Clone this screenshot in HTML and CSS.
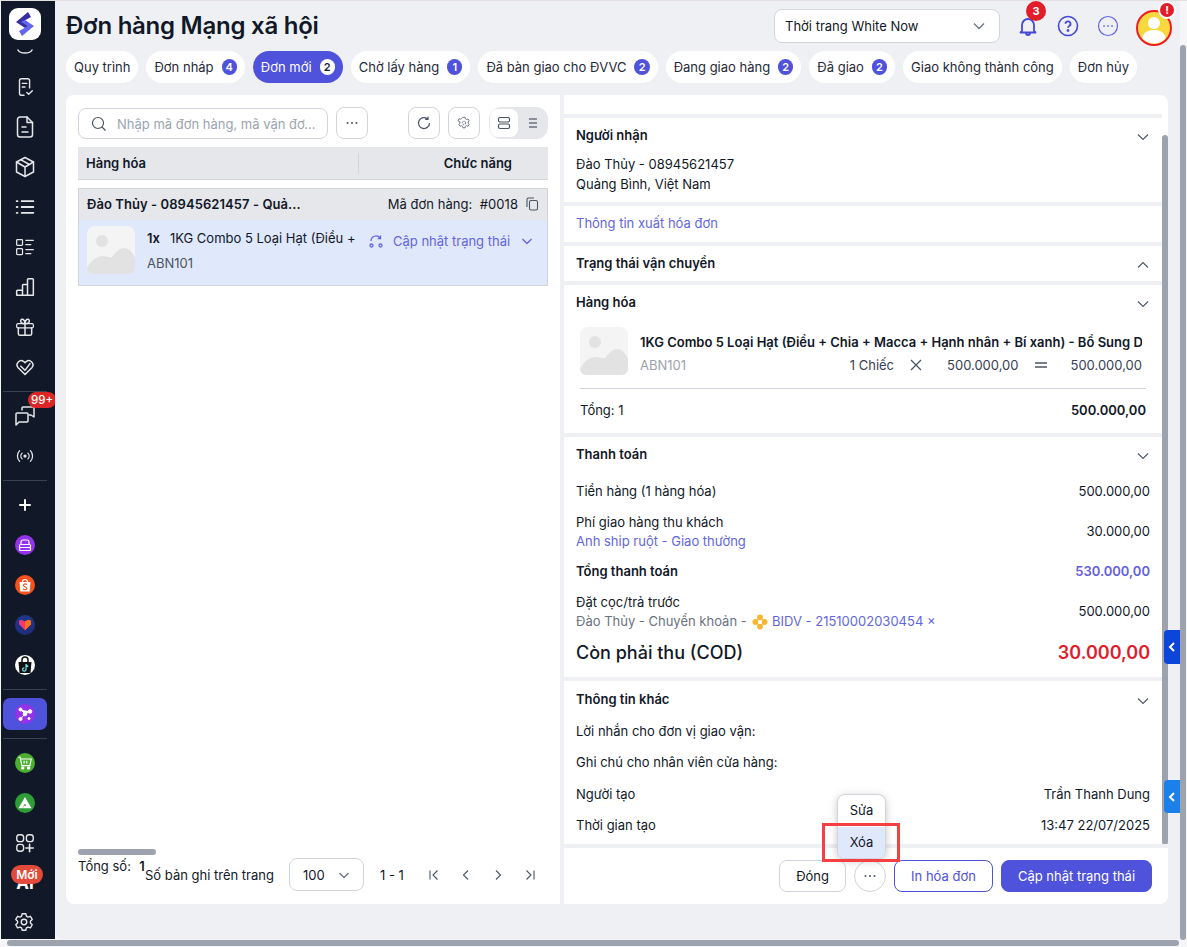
FILE: index.html
```html
<!DOCTYPE html>
<html lang="vi">
<head>
<meta charset="utf-8">
<title>Đơn hàng Mạng xã hội</title>
<link rel="stylesheet" href="styles.css">
</head>
<body>
<div class="app">
  <aside class="side">
    <div class="logo">
      <svg width="24" height="26" viewBox="0 0 24 26"><path d="M15 1 L18 6 L9 11 L16 15 L12 17 L3 11 Z" fill="#3730a3"/><path d="M9 25 L6 20 L15 15 L8 11 L12 9 L21 15 Z" fill="#6366f1"/></svg>
    </div>
    <div class="side-item cut"><svg class="ic" width="24" height="8" viewBox="0 0 24 8"><path d="M5 1c1 2 3 3 7 3s6-1 7-3"/></svg></div>
    <div class="side-item"><svg class="ic" width="22" height="22" viewBox="0 0 24 24"><path d="M11 21H8a2 2 0 0 1-2-2V5a2 2 0 0 1 2-2h7a2 2 0 0 1 2 2v8"/><path d="M9 8h5M9 12h3M14 18l2 2 4-4"/></svg></div>
    <div class="side-item"><svg class="ic" width="24" height="24" viewBox="0 0 24 24"><path d="M14 2H7a2.500 2.500 0 0 0-2.500 2.500v15A2.500 2.500 0 0 0 7 22h10a2.500 2.500 0 0 0 2.500-2.500V7.500z"/><path d="M14 2v5.500h5.500M9 12h4M9 17h6"/></svg></div>
    <div class="side-item"><svg class="ic" width="24" height="24" viewBox="0 0 24 24"><path d="M12 2.500 20.500 7v10L12 21.500 3.500 17V7z"/><path d="M3.500 7 12 12l8.500-5M12 12v9.500M8 4.800l8.500 4.700"/></svg></div>
    <div class="side-item"><svg class="ic" width="20" height="20" viewBox="0 0 24 24"><path d="M8 5h14M8 12h14M8 19h14M2 5h1M2 12h1M2 19h1" stroke-width="2.200"/></svg></div>
    <div class="side-item"><svg class="ic" width="20" height="20" viewBox="0 0 24 24"><rect x="2" y="3" width="7" height="7" rx="1"/><rect x="2" y="14" width="7" height="7" rx="1"/><path d="M13 4h9M13 9h6M13 15h9M13 20h6"/></svg></div>
    <div class="side-item"><svg class="ic" width="20" height="20" viewBox="0 0 24 24"><path d="M2 22v-5a1 1 0 0 1 1-1h6v6zM9 22V10a1 1 0 0 1 1-1h5v13zM15 22V3a1 1 0 0 1 1-1h5a1 1 0 0 1 1 1v19zM2 22h20" stroke-width="1.800"/></svg></div>
    <div class="side-item"><svg class="ic" width="20" height="20" viewBox="0 0 24 24"><rect x="2" y="8" width="20" height="5" rx="1.500"/><path d="M4 13v7a2 2 0 0 0 2 2h12a2 2 0 0 0 2-2v-7M12 8v14M12 8C8.500 8 6 6.500 7 4s5-1.500 5 4c0-5.500 4-6.500 5-4s-1.500 4-5 4z" stroke-width="1.800"/></svg></div>
    <div class="side-item"><svg class="ic" width="20" height="20" viewBox="0 0 24 24"><path d="M12 21 3.500 12.500a5 5 0 0 1 7-7l1.500 1.500 1.500-1.500a5 5 0 0 1 7 7z" stroke-width="1.800"/><path d="M7 11l5 5 6-8" stroke-width="1.800"/></svg></div>
    <div class="side-div"></div>
    <div class="side-item">
      <svg class="ic" width="24" height="24" viewBox="0 0 24 24"><path d="M9 6V4a1 1 0 0 1 1-1h10a1 1 0 0 1 1 1v9l0 0-3-2h-2"/><path d="M3 10a1 1 0 0 1 1-1h10a1 1 0 0 1 1 1v7a1 1 0 0 1-1 1H6l-3 3z"/></svg>
      <span class="badge-99">99+</span>
    </div>
    <div class="side-item"><svg class="ic" width="20" height="20" viewBox="0 0 24 24"><circle cx="12" cy="12" r="1.200" fill="#e5e7eb"/><path d="M8.500 8.500a5 5 0 0 0 0 7M15.500 8.500a5 5 0 0 1 0 7M5.500 5.500a9.500 9.500 0 0 0 0 13M18.500 5.500a9.500 9.500 0 0 1 0 13"/></svg></div>
    <div class="side-div"></div>
    <div class="side-item"><svg class="ic" width="24" height="24" viewBox="0 0 24 24"><path d="M12 7v10M7 12h10" stroke-width="2" stroke="#fff"/></svg></div>
    <div class="side-item"><span class="disc purple"><svg width="16" height="16" viewBox="0 0 16 16" fill="none" stroke="#fff" stroke-width="1.200"><path d="M4 7V5a2 2 0 0 1 2-2h4a2 2 0 0 1 2 2v2"/><rect x="2.500" y="7.500" width="11" height="3" rx="1"/><rect x="2.500" y="10.500" width="11" height="3" rx="1"/></svg></span></div>
    <div class="side-item"><span class="disc shopee"><svg width="16" height="16" viewBox="0 0 16 16"><path d="M2.500 5h11l-.8 9.500H3.300z" fill="#fff"/><path d="M5.500 5a2.500 2.500 0 0 1 5 0" fill="none" stroke="#fff" stroke-width="1.200"/><path d="M10 7.500C8.500 6.500 6.300 7 6.500 8.500S10 10 9.800 11.500 7.300 13 6 12" fill="none" stroke="#f4511e" stroke-width="1.200"/></svg></span></div>
    <div class="side-item"><span class="disc lazada"><svg width="14" height="12" viewBox="0 0 16 14"><path d="M8 13 1 6V2l3-1 4 2 4-2 3 1v4z" fill="#f5357b"/><path d="M8 13V3l4-2 3 1v4z" fill="#f97316"/></svg></span></div>
    <div class="side-item"><span class="disc tiktok"><svg width="16" height="18" viewBox="0 0 16 18"><path d="M1.500 6h13l-1 11h-11z" fill="#111"/><path d="M5 6V4a3 3 0 0 1 6 0v2" fill="none" stroke="#111" stroke-width="1.500"/><path d="M9 8v5.500a1.700 1.700 0 1 1-1.700-1.700M9 8.500c.4 1.200 1.200 1.800 2.300 1.900" fill="none" stroke="#6ee7f0" stroke-width="1.200"/></svg></span></div>
    <div class="side-div"></div>
    <div class="side-active"><span class="disc purple"><svg width="16" height="16" viewBox="0 0 16 16" fill="#fff" stroke="#fff" stroke-width="1"><path d="M3.500 3.500 8 8l5-2.500M8 8l-4.500 5"/><circle cx="3.500" cy="3.500" r="1.500"/><circle cx="8" cy="8" r="1.800"/><circle cx="13" cy="5.500" r="1.800"/><circle cx="3.500" cy="13" r="1.500"/><circle cx="12" cy="12.500" r="1"/></svg></span></div>
    <div class="side-div after"></div>
    <div class="side-item"><span class="disc green"><svg width="16" height="16" viewBox="0 0 18 18" fill="none" stroke="#fff" stroke-width="1.300"><path d="M1.500 2.500h2l2 9.500h9l1.500-7.500H4"/><path d="M8 6.500v3M11 6.500v3"/><circle cx="6.500" cy="14.500" r="1.200" fill="#fff"/><circle cx="13" cy="14.500" r="1.200" fill="#fff"/></svg></span></div>
    <div class="side-item"><span class="disc dgreen"><svg width="16" height="14" viewBox="0 0 18 16"><path d="M9 1 1.500 14H6l3-5.500L10.500 11H8l-1.500 3H16.500z" fill="#fff"/></svg></span></div>
    <div class="side-item"><svg class="ic" width="22" height="22" viewBox="0 0 24 24"><rect x="3" y="3" width="7.500" height="7.500" rx="3"/><rect x="13.500" y="3" width="7.500" height="7.500" rx="3"/><rect x="3" y="13.500" width="7.500" height="7.500" rx="3"/><path d="M17 13.500v8M13 17.500h8" stroke-width="1.800"/></svg></div>
    <div class="side-item">
      <span class="ai">AI</span>
      <span class="badge-new">Mới</span>
    </div>
    <div class="side-item gear"><svg class="ic" width="22" height="22" viewBox="0 0 24 24"><circle cx="12" cy="12" r="3"/><path d="M10 3h4l.6 2.700 1.800 1 2.600-.9 2 3.400-2 1.900v2l2 1.900-2 3.400-2.600-.9-1.800 1L14 21h-4l-.6-2.500-1.800-1-2.600.9-2-3.400 2-1.900v-2l-2-1.900 2-3.400 2.600.9 1.800-1z"/></svg></div>
  </aside>

  <main class="main">
    <header class="top">
      <h1 class="title">Đơn hàng Mạng xã hội</h1>
      <div class="store"><span>Thời trang White Now</span><svg class="chev" width="16" height="16" viewBox="0 0 16 16"><path d="M3 5.500l5 5 5-5"/></svg></div>
      <div class="top-icons">
        <span class="top-ic">
          <svg width="24" height="24" viewBox="0 0 24 24" fill="none" stroke="#4548d6" stroke-width="1.800"><path d="M6 17V11a6 6 0 0 1 12 0v6l1.500 1.500h-15zM10 19a2 2 0 0 0 4 0" stroke-linejoin="round"/></svg>
          <span class="badge-bell">3</span>
        </span>
        <span class="top-ic">
          <svg width="22" height="22" viewBox="0 0 22 22" fill="none" stroke="#4548d6" stroke-width="1.600"><circle cx="11" cy="11" r="9.500"/><path d="M8.500 8.800a2.500 2.500 0 1 1 3.700 2.200c-.8.500-1.200 1-1.200 1.800" stroke-width="1.800"/><circle cx="11" cy="15.500" r=".6" fill="#4548d6"/></svg>
        </span>
        <span class="top-ic">
          <svg width="22" height="22" viewBox="0 0 22 22" fill="none" stroke="#6366e0" stroke-width="1.200"><circle cx="11" cy="11" r="9.500"/><path d="M6.800 11h.5M10.800 11h.5M14.800 11h.5" stroke-width="1.500" stroke-linecap="round"/></svg>
        </span>
        <span class="avatar">
          <svg width="32" height="32" viewBox="0 0 32 32"><circle cx="16" cy="11" r="6" fill="#fff"/><path d="M4 28c1-8 6-10 12-10s11 2 12 10c-3 3-8 4-12 4s-9-1-12-4z" fill="#fff"/></svg>
          <span class="badge-alert">!</span>
        </span>
      </div>
    </header>

    <nav class="tabs">
      <a class="tab">Quy trình</a>
      <a class="tab">Đơn nháp <b class="count">4</b></a>
      <a class="tab on">Đơn mới <b class="count">2</b></a>
      <a class="tab">Chờ lấy hàng <b class="count">1</b></a>
      <a class="tab">Đã bàn giao cho ĐVVC <b class="count">2</b></a>
      <a class="tab">Đang giao hàng <b class="count">2</b></a>
      <a class="tab">Đã giao <b class="count">2</b></a>
      <a class="tab">Giao không thành công</a>
      <a class="tab">Đơn hủy</a>
    </nav>

    <div class="panels">
      <section class="list">
        <div class="toolbar">
          <div class="search">
            <svg width="16" height="16" viewBox="0 0 16 16" fill="none" stroke="#4b5563" stroke-width="1.200"><circle cx="7" cy="7" r="5.500"/><path d="M11 11l3.500 3.500"/></svg>
            <span>Nhập mã đơn hàng, mã vận đơ...</span>
          </div>
          <button class="sq"><svg width="16" height="16" viewBox="0 0 16 16"><circle cx="3.500" cy="8" r="1" fill="#4b5563"/><circle cx="8" cy="8" r="1" fill="#4b5563"/><circle cx="12.500" cy="8" r="1" fill="#4b5563"/></svg></button>
          <button class="sq push"><svg width="16" height="16" viewBox="0 0 16 16" fill="none" stroke="#4b5563" stroke-width="1.200"><path d="M13.500 8A5.500 5.500 0 1 1 11.500 3.800M12 1.500v2.800H9.200"/></svg></button>
          <button class="sq"><svg width="14" height="14" viewBox="0 0 16 16" fill="none" stroke="#6b7280" stroke-width="1.100"><circle cx="8" cy="8" r="2" stroke-dasharray="2 1"/><path d="M6.700 1.500h2.600l.4 1.700 1.300.7 1.600-.6 1.300 2.300-1.200 1.200v1.400l1.200 1.200-1.300 2.300-1.600-.6-1.300.7-.4 1.700H6.700l-.4-1.700-1.300-.7-1.600.6-1.300-2.300 1.200-1.200V6.600L1.100 5.400l1.300-2.300 1.600.6 1.300-.7z"/></svg></button>
          <div class="view">
            <span class="view-on"><svg width="16" height="16" viewBox="0 0 16 16" fill="none" stroke="#4b5563" stroke-width="1.200"><rect x="2.500" y="2.500" width="11" height="4.500" rx="1.500"/><rect x="2.500" y="9" width="11" height="4.500" rx="1.500"/></svg></span>
            <span class="view-off"><svg width="16" height="16" viewBox="0 0 16 16" fill="none" stroke="#6b7280" stroke-width="1.400"><path d="M4 4h8M4 8h8M4 12h8"/></svg></span>
          </div>
        </div>
        <div class="thead">
          <span class="th-a">Hàng hóa</span>
          <span class="th-b">Chức năng</span>
        </div>
        <article class="order">
          <div class="order-head">
            <b>Đào Thủy - 08945621457 - Quả...</b>
            <span class="code">Mã đơn hàng:&nbsp; #0018</span>
            <svg width="14" height="14" viewBox="0 0 14 14" fill="none" stroke="#4b5563" stroke-width="1.100"><rect x="4.500" y="3.500" width="8" height="9.500" rx="1.500"/><path d="M2 10V2.500A1.500 1.500 0 0 1 3.500 1H9"/></svg>
          </div>
          <div class="order-body">
            <svg class="thumb" width="48" height="48" viewBox="0 0 48 48"><rect width="48" height="48" rx="8" fill="#f4f4f4"/><circle cx="15" cy="15" r="6" fill="#e2e2e2"/><path d="M0 42c4-8 10-12 16-12 4 0 6 2 9 1 4-5 8-9 12-9 5 0 9 5 11 10v10a6 6 0 0 1-6 6H6a6 6 0 0 1-6-6z" fill="#e2e2e2"/></svg>
            <div class="order-info">
              <div class="order-name"><b>1x</b><span>1KG Combo 5 Loại Hạt (Điều +</span></div>
              <div class="order-sku">ABN101</div>
            </div>
            <div class="order-act">
              <svg width="16" height="16" viewBox="0 0 16 16" fill="none" stroke="#6366e0" stroke-width="1.300"><path d="M3 8a5 5 0 0 1 9-3"/><path d="M12.500 2.500v3H9.800"/><circle cx="3.500" cy="12.500" r="1.500"/><circle cx="12.500" cy="12.500" r="1.500"/></svg>
              <span>Cập nhật trạng thái</span>
              <svg class="chev-b" width="14" height="14" viewBox="0 0 14 14"><path d="M2.500 5l4.500 4.500L11.500 5"/></svg>
            </div>
          </div>
        </article>
        <div class="list-foot">
          <div class="hthumb"></div>
          <div class="pager">
            <div class="total">Tổng số: &nbsp;<b>1</b></div>
            <span class="per">Số bản ghi trên trang</span>
            <div class="size"><span>100</span><svg class="chev" width="14" height="14" viewBox="0 0 14 14"><path d="M2.500 5l4.500 4.500L11.500 5"/></svg></div>
            <span class="range">1 - 1</span>
            <div class="nav">
              <svg width="16" height="16" viewBox="0 0 16 16"><path d="M4 3.500v9M11.500 3.500 7 8l4.500 4.500"/></svg>
              <svg width="16" height="16" viewBox="0 0 16 16"><path d="M10 3.500 5.500 8l4.500 4.500"/></svg>
              <svg width="16" height="16" viewBox="0 0 16 16"><path d="M6 3.500 10.500 8 6 12.500"/></svg>
              <svg width="16" height="16" viewBox="0 0 16 16"><path d="M12 3.500v9M4.500 3.500 9 8l-4.500 4.500"/></svg>
            </div>
          </div>
        </div>
      </section>

      <section class="detail">
        <div class="scroll">
          <div class="stack">
            <div class="sec sec-top"></div>
            <div class="sec">
              <div class="sec-head"><b>Người nhận</b><svg class="chev-g" width="16" height="16" viewBox="0 0 16 16"><path d="M3 5.500l5 5 5-5"/></svg></div>
              <div class="recv">Đào Thủy - 08945621457<br>Quảng Bình, Việt Nam</div>
            </div>
            <div class="sec sec-link"><a class="link">Thông tin xuất hóa đơn</a></div>
            <div class="sec sec-ship">
              <div class="sec-head"><b>Trạng thái vận chuyển</b><svg class="chev-g" width="16" height="16" viewBox="0 0 16 16"><path d="M3 10.500l5-5 5 5"/></svg></div>
            </div>
            <div class="sec sec-goods">
              <div class="sec-head"><b>Hàng hóa</b><svg class="chev-g" width="16" height="16" viewBox="0 0 16 16"><path d="M3 5.500l5 5 5-5"/></svg></div>
              <div class="good">
                <svg class="thumb" width="48" height="48" viewBox="0 0 48 48"><rect width="48" height="48" rx="8" fill="#f4f4f4"/><circle cx="15" cy="15" r="6" fill="#e2e2e2"/><path d="M0 42c4-8 10-12 16-12 4 0 6 2 9 1 4-5 8-9 12-9 5 0 9 5 11 10v10a6 6 0 0 1-6 6H6a6 6 0 0 1-6-6z" fill="#e2e2e2"/></svg>
                <div class="good-info">
                  <div class="good-name">1KG Combo 5 Loại Hạt (Điều + Chia + Macca + Hạnh nhân + Bí xanh) - Bổ Sung D</div>
                  <div class="good-row">
                    <span class="muted">ABN101</span>
                    <span class="qty">1 Chiếc</span>
                    <svg class="op" width="12" height="12" viewBox="0 0 12 12"><path d="M1 1l10 10M11 1 1 11"/></svg>
                    <span>500.000,00</span>
                    <svg class="op eq" width="14" height="8" viewBox="0 0 14 8"><path d="M1 2h12M1 6h12"/></svg>
                    <span>500.000,00</span>
                  </div>
                </div>
              </div>
              <div class="good-total"><span>Tổng: 1</span><b>500.000,00</b></div>
            </div>
            <div class="sec sec-pay">
              <div class="sec-head"><b>Thanh toán</b><svg class="chev-g" width="16" height="16" viewBox="0 0 16 16"><path d="M3 5.500l5 5 5-5"/></svg></div>
              <div class="rows">
                <div class="row"><span>Tiền hàng (1 hàng hóa)</span><span>500.000,00</span></div>
                <div class="row two"><div>Phí giao hàng thu khách<div class="link">Anh ship ruột - Giao thường</div></div><span>30.000,00</span></div>
                <div class="row"><b>Tổng thanh toán</b><b class="purple-t">530.000,00</b></div>
                <div class="row two"><div>Đặt cọc/trả trước<div class="dep"><span class="grey">Đào Thủy - Chuyển khoản - </span><svg class="flower" width="16" height="16" viewBox="0 0 16 16"><g fill="#f7b733"><circle cx="8" cy="3.500" r="3"/><circle cx="8" cy="12.500" r="3"/><circle cx="3.500" cy="8" r="3"/><circle cx="12.500" cy="8" r="3"/></g><circle cx="8" cy="8" r="2" fill="#fff"/></svg><span class="link"> BIDV - 21510002030454 ×</span></div></div><span>500.000,00</span></div>
                <div class="row cod"><span>Còn phải thu (COD)</span><span class="red">30.000,00</span></div>
              </div>
            </div>
            <div class="sec sec-other">
              <div class="sec-head"><b>Thông tin khác</b><svg class="chev-g" width="16" height="16" viewBox="0 0 16 16"><path d="M3 5.500l5 5 5-5"/></svg></div>
              <div class="rows other">
                <div class="row"><span>Lời nhắn cho đơn vị giao vận:</span></div>
                <div class="row"><span>Ghi chú cho nhân viên cửa hàng:</span></div>
                <div class="row"><span>Người tạo</span><span>Trần Thanh Dung</span></div>
                <div class="row"><span>Thời gian tạo</span><span>13:47 22/07/2025</span></div>
              </div>
            </div>
          </div>
          <div class="vthumb"></div>
        </div>
        <div class="actions">
          <button class="btn">Đóng</button>
          <button class="btn round"><svg width="16" height="16" viewBox="0 0 16 16"><circle cx="3.500" cy="8" r="1" fill="#4b5563"/><circle cx="8" cy="8" r="1" fill="#4b5563"/><circle cx="12.500" cy="8" r="1" fill="#4b5563"/></svg></button>
          <button class="btn outline">In hóa đơn</button>
          <button class="btn solid">Cập nhật trạng thái</button>
          <div class="menu">
            <div class="menu-item">Sửa</div>
            <div class="menu-item hover">Xóa</div>
          </div>
          <div class="mark"></div>
        </div>
      </section>
    </div>
    <span class="flag dark"><svg width="10" height="10" viewBox="0 0 10 10"><path d="M7 1 3 5l4 4"/></svg></span>
    <span class="flag light"><svg width="10" height="10" viewBox="0 0 10 10"><path d="M7 1 3 5l4 4"/></svg></span>
  </main>
  <div class="page-v"></div>
  <div class="page-h"></div>
</div>
</body>
</html>
```
FILE: styles.css
```css
* { box-sizing: border-box; }
html, body { margin: 0; height: 100%; overflow: hidden; background: #f6f6f8; }
body { font: 13px/20px Inter, "Noto Sans", sans-serif; color: #111827; }
b { font-weight: 600; }
button { font: inherit; color: inherit; background: #fff; padding: 0; cursor: pointer; }
svg { display: block; flex: none; }

.app { position: relative; display: flex; width: 1187px; height: 947px; padding-left: 1px; border-top: 1px solid #e3dfe0; }

/* sidebar */
.side { width: 54px; height: 938px; flex: none; background: #111827; display: flex; flex-direction: column; padding-top: 7px; overflow: hidden; }
.logo { width: 32px; height: 32px; flex: none; margin: 0 0 7px 8px; background: #fff; border-radius: 9px; display: flex; align-items: center; justify-content: center; }
.side-item { position: relative; height: 40px; flex: none; display: flex; align-items: center; justify-content: center; padding-right: 6px; }
.side-item.cut { height: 20px; align-items: flex-start; padding-top: 2px; }
.side-item.gear { padding-right: 8px; height: 38px; }
.ic { fill: none; stroke: #e5e7eb; stroke-width: 1.500; stroke-linecap: round; stroke-linejoin: round; }
.side-div { height: 1px; margin: 4px 8px 4px 2px; background: #374151; flex: none; }
.side-div.after { margin-top: 8px; }
.side-active { height: 32px; margin: 4px 8px 0 2px; border-radius: 7px; background: #4f52db; display: flex; align-items: center; justify-content: center; flex: none; }
.disc { width: 20px; height: 20px; border-radius: 50%; display: flex; align-items: center; justify-content: center; overflow: hidden; }
.purple { background: #9333ea; }
.shopee { background: #f4511e; }
.lazada { background: linear-gradient(160deg, #1e3a8a, #1e2a78); }
.tiktok { background: #fff; }
.green { background: #4caf32; }
.dgreen { background: #2e9e36; }
.badge-99 { position: absolute; top: -4px; left: 27px; height: 16px; padding: 0 3px; border-radius: 8px; background: #dc2626; color: #fff; font-size: 11.500px; line-height: 16px; font-weight: 500; }
.ai { color: #fff; font-weight: 700; font-size: 17px; line-height: 20px; }
.badge-new { position: absolute; top: 2px; left: 10px; width: 32px; height: 19px; border-radius: 10px; background: #e24a3b; color: #fff; font-size: 12px; font-weight: 600; line-height: 19px; text-align: center; }

/* main */
.main { position: relative; flex: none; width: 1125px; height: 938px; background: #eef0f4; border-radius: 0 0 0 8px; padding: 0 12px 0 11px; }
.top { display: flex; align-items: center; height: 50px; margin-right: -4px; }
.title { margin: 0; font-size: 24px; line-height: 32px; font-weight: 600; letter-spacing: -.25px; }
.store { margin-left: auto; width: 226px; height: 34px; margin-top: -1px; display: flex; align-items: center; justify-content: space-between; padding: 0 12px 0 10px; background: #fff; border: 1px solid #d1d5db; border-radius: 8px; }
.chev, .chev-g, .chev-b { fill: none; stroke: #6b7280; stroke-width: 1.300; }
.chev-g { stroke: #4b5563; stroke-width: 1.100; }
.chev-b { stroke: #6366e0; }
.top-icons { display: flex; align-items: center; margin-left: 8px; }
.top-ic { position: relative; width: 40px; height: 40px; display: flex; align-items: center; justify-content: center; }
.badge-bell { position: absolute; top: -5px; left: 18px; width: 20px; height: 20px; border-radius: 50%; background: #e11d2a; color: #fff; font-size: 11px; font-weight: 700; line-height: 20px; text-align: center; }
.avatar { position: relative; width: 36px; height: 36px; margin-left: 8px; margin-top: 3px; border-radius: 50%; background: #f6d93f; border: 2px solid #ef1c24; display: flex; align-items: flex-end; justify-content: center; overflow: visible; }
.avatar svg { clip-path: circle(16px at 16px 16px); }
.badge-alert { position: absolute; top: -11px; right: -6px; width: 18px; height: 18px; border-radius: 50%; background: #e11d2a; border: 2px solid #fff; color: #fff; font-size: 11px; font-weight: 700; line-height: 14px; text-align: center; }

.tabs { display: flex; gap: 8px; height: 32px; margin-bottom: 12px; }
.tab { display: flex; align-items: center; gap: 8px; height: 32px; padding: 0 8px; background: #fff; border-radius: 16px; white-space: nowrap; color: #1f2937; }
.count { width: 15.200px; height: 16px; border-radius: 8px; background: #4f52db; color: #fff; font-size: 11px; line-height: 16px; text-align: center; font-weight: 600; }
.tab.on { background: #4f52db; color: #fff; }
.tab.on .count { background: #fff; color: #111827; }

.panels { display: flex; gap: 4px; height: 809px; }
.list { width: 494px; position: relative; background: #fff; border-radius: 8px 0 0 8px; padding: 12px 12px 0; display: flex; flex-direction: column; }
.toolbar { display: flex; align-items: center; gap: 8px; height: 32px; }
.search { width: 250px; height: 31px; margin-top: 1px; display: flex; align-items: center; gap: 10px; padding: 0 12px; border: 1px solid #d1d5db; border-radius: 8px; color: #9ca3af; white-space: nowrap; overflow: hidden; }
.sq { width: 32px; height: 32px; display: flex; align-items: center; justify-content: center; border: 1px solid #d1d5db; border-radius: 8px; }
.push { margin-left: 32px; }
.view { display: flex; align-items: center; width: 59px; height: 32px; margin-left: 1px; padding: 1px; border-radius: 12px; background: #e5e7eb; }
.view-on { width: 28px; height: 28px; background: #fff; border-radius: 8px; display: flex; align-items: center; justify-content: center; }
.view-off { flex: 1; display: flex; align-items: center; justify-content: center; }
.thead { display: flex; align-items: center; height: 33px; margin-top: 8px; background: #e5e7eb; border-bottom: 1px solid #d1d5db; font-weight: 600; }
.th-a { width: 281px; height: 21px; line-height: 21px; padding-left: 8px; border-right: 1px solid #d1d5db; }
.th-b { width: 153px; text-align: right; }

.order { margin-top: 8px; height: 98px; border: 1px solid #d1d5db; }
.order-head { display: flex; align-items: center; height: 31px; padding: 0 8px 1px; background: #e5e7eb; }
.order-head b { flex: 1; white-space: nowrap; letter-spacing: .07px; }
.order-head svg { margin-left: 7px; }
.code { font-weight: 400; white-space: nowrap; letter-spacing: .05px; }
.order-body { position: relative; display: flex; height: 65px; padding: 6px 8px 0; background: #e0e8fb; }
.order-info { margin-left: 12px; width: 210px; }
.order-name { display: flex; gap: 10px; height: 20px; margin-top: 2px; white-space: nowrap; overflow: hidden; }
.order-sku { margin-top: 5px; color: #4b5563; }
.order-act { display: flex; align-items: center; height: 20px; margin-top: 5px; margin-left: 11px; color: #6366e0; gap: 9px; white-space: nowrap; }
.chev-b { margin-left: 1px; }

.list-foot { margin-top: auto; height: 55px; }
.hthumb { width: 78px; height: 6px; border-radius: 3px; background: #9ca3af; }
.pager { display: flex; align-items: center; height: 33px; margin-top: 3px; white-space: nowrap; }
.total { width: 67px; margin-top: -18px; }
.total b { margin-left: 1px; }
.per { width: 144px; }
.size { width: 75px; height: 33px; display: flex; align-items: center; justify-content: space-between; padding: 0 12px 0 13px; border: 1px solid #d1d5db; border-radius: 8px; }
.range { margin-left: 16px; width: 45px; }
.nav { display: flex; gap: 16px; margin-left: 1px; }
.nav svg { fill: none; stroke: #4b5563; stroke-width: 1.100; }

.detail { flex: 1; min-width: 0; display: flex; flex-direction: column; gap: 4px; }
.scroll { position: relative; height: 749px; padding-right: 6px; background: #fff; border-radius: 0 8px 0 0; overflow: hidden; }
.stack { display: flex; flex-direction: column; gap: 4px; background: #eef0f4; }
.sec { background: #fff; padding: 7px 12px 0; }
.sec-top { height: 19px; padding: 0; }
.sec-head { display: flex; align-items: center; justify-content: space-between; height: 20px; }
.sec-head svg { margin-right: -1px; margin-top: 3px; }
.recv { margin-top: 9px; padding-bottom: 8px; }
.sec-link { height: 36px; padding-top: 7px; }
.link { color: #6366e0; }
.sec-ship { height: 35px; }
.sec-goods { height: 148px; }
.good { display: flex; gap: 12px; margin-top: 15px; padding-left: 4px; }
.good-info { min-width: 0; flex: 1; }
.good-name { margin-top: 5px; font-weight: 600; white-space: nowrap; overflow: hidden; height: 20px; width: 502px; }
.good-row { display: flex; align-items: center; margin-top: 3px; width: 502px; color: #374151; }
.muted { color: #9ca3af; flex: 1; }
.op { fill: none; stroke: #4b5563; stroke-width: 1.300; margin: 0 25px 0 16px; }
.op.eq { margin: 0 23px 0 15px; }
.good-total { display: flex; justify-content: space-between; align-items: center; height: 44px; margin: 13px 4px 0 4px; padding-bottom: 2px; border-top: 1px solid #d1d5db; }
.sec-pay { padding-bottom: 13px; }
.rows { display: flex; flex-direction: column; gap: 11px; margin-top: 17px; }
.row { display: flex; justify-content: space-between; align-items: center; }
.row.two { line-height: 19px; }
.row.two > div { padding-top: 1px; margin-bottom: -1px; }
.purple-t { color: #5f5fe0; }
.dep { display: flex; align-items: center; white-space: pre; }
.grey { color: #6b7280; }
.flower { margin: 0 0 0 2px; }
.cod { font-size: 18px; font-weight: 500; line-height: 22px; margin-top: 1px; }
.red { color: #e11d2a; font-weight: 600; font-size: 18px; }
.sec-other { padding-top: 8px; padding-bottom: 8px; }
.other { gap: 11.300px; margin-top: 12px; }
.vthumb { position: absolute; right: 0; top: 40px; width: 6px; height: 710px; border-radius: 3px; background: #9ca3af; }

.actions { position: relative; flex: 1; display: flex; justify-content: flex-end; align-items: center; gap: 8px; padding: 0 16px; background: #fff; border-radius: 0 0 8px 0; }
.btn { height: 32px; padding: 0 16px; border: 1px solid #d1d5db; border-radius: 8px; }
.round { width: 32px; padding: 0; border-radius: 50%; display: flex; align-items: center; justify-content: center; }
.outline { width: 99px; padding: 0; border-color: #4f52db; color: #4f52db; }
.solid { width: 151px; padding: 0; background: #4f52db; border-color: #4f52db; color: #fff; }
.menu { position: absolute; right: 282px; bottom: 45px; width: 49px; height: 65px; border: 1px solid #d1d5db; border-radius: 8px; background: #fff; box-shadow: 0 2px 8px rgba(0,0,0,.22); overflow: hidden; }
.menu-item { height: 32px; line-height: 31px; text-align: center; }
.menu-item.hover { background: #e0e8fb; }
.mark { position: absolute; right: 268px; bottom: 42px; width: 78px; height: 39px; border: 3px solid #f44043; }

.flag { position: absolute; left: 1109px; width: 16px; display: flex; align-items: center; justify-content: center; border-radius: 4px 0 0 4px; }
.flag svg { fill: none; stroke: #fff; stroke-width: 2; }
.flag.dark { top: 629px; height: 34px; background: #0b45d9; }
.flag.light { top: 779px; height: 33px; background: #1c80ea; }
.page-v { position: absolute; left: 1180px; top: 44px; width: 6px; height: 895px; border-radius: 3px; background: #9ca3af; }
.page-h { position: absolute; left: 7px; top: 939px; width: 1172px; height: 6px; border-radius: 3px; background: #9ca3af; }
```
